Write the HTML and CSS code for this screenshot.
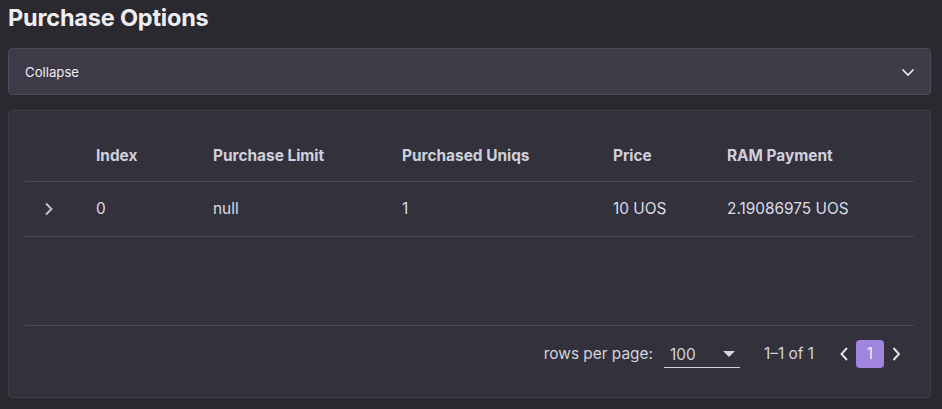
FILE: index.html
```html
<!DOCTYPE html>
<html>
<head>
<meta charset="utf-8">
<link rel="stylesheet" href="styles.css">
</head>
<body>
<h1 class="title">Purchase Options</h1>
<div class="collapse">
  <span>Collapse</span>
  <svg class="chev-down" width="14" height="14" viewBox="0 0 14 14"><path d="M1.5 4.5 L7 10 L12.5 4.5" fill="none" stroke="#e8e8ee" stroke-width="1.7"/></svg>
</div>
<div class="card">
  <table class="tbl">
    <colgroup>
      <col class="c0"><col class="c1"><col class="c2"><col class="c3"><col class="c4"><col class="c5">
    </colgroup>
    <thead>
      <tr><th></th><th>Index</th><th>Purchase Limit</th><th>Purchased Uniqs</th><th>Price</th><th>RAM Payment</th></tr>
    </thead>
    <tbody>
      <tr>
        <td class="exp"><svg width="14" height="16" viewBox="0 0 14 16"><path d="M4 2.5 L9.5 8 L4 13.5" fill="none" stroke="#c8c8d2" stroke-width="1.8"/></svg></td>
        <td>0</td><td>null</td><td>1</td><td>10 UOS</td><td>2.19086975 UOS</td>
      </tr>
    </tbody>
  </table>
  <div class="spacer"></div>
  <div class="footer">
    <span class="rpp">rows per page:</span>
    <div class="select"><span>100</span><svg width="12" height="7" viewBox="0 0 12 7"><path d="M0 0 H12 L6 6 Z" fill="#d6d6de"/></svg></div>
    <span class="range">1–1 of 1</span>
    <div class="pager">
      <svg width="24" height="24" viewBox="0 0 24 24"><path d="M15 6 L9.5 12 L15 18" fill="none" stroke="#e6e6ec" stroke-width="1.9"/></svg>
      <span class="page">1</span>
      <svg width="24" height="24" viewBox="0 0 24 24"><path d="M9.5 6 L15 12 L9.5 18" fill="none" stroke="#e6e6ec" stroke-width="1.9"/></svg>
    </div>
  </div>
</div>
</body>
</html>
```
FILE: styles.css
```css
html, body {
  margin: 0;
  background: #2a2930;
}
body {
  padding: 0 11px 0 8px;
  font-family: Inter, "Noto Sans", sans-serif;
  color: #d8d8e2;
}
.title {
  margin: 0;
  padding-top: 3px;
  font-size: 23.5px;
  line-height: 29px;
  font-weight: 700;
  color: #eeeef2;
  letter-spacing: -0.2px;
}
.collapse {
  margin-top: 16px;
  height: 47px;
  box-sizing: border-box;
  background: #3e3b48;
  border: 1px solid #4d4a58;
  border-radius: 4px;
  display: flex;
  align-items: center;
  justify-content: space-between;
  padding: 0 15px 0 16px;
  font-size: 13.2px;
  color: #ececf2;
}
.chev-down { display: block; }
.card {
  margin-top: 15px;
  height: 288px;
  box-sizing: border-box;
  background: #33313c;
  border: 1px solid #403e49;
  border-radius: 4px;
  padding: 0 16px;
  display: flex;
  flex-direction: column;
}
.tbl {
  margin-top: 22px;
  width: 100%;
  border-collapse: collapse;
  table-layout: fixed;
  font-size: 15.4px;
}
.c0 { width: 55px; }
.c1 { width: 117px; }
.c2 { width: 189px; }
.c3 { width: 211px; }
.c4 { width: 114px; }
.tbl th {
  text-align: left;
  font-weight: 700;
  color: #ced0dc;
  height: 48px;
  padding: 0 16px 3px;
  box-sizing: border-box;
  border-bottom: 1px solid #4a4855;
}
.tbl td {
  height: 54px;
  padding: 0 16px;
  color: #dcdce6;
  border-bottom: 1px solid #4a4855;
}
.tbl td.exp { padding-left: 17px; }
.tbl td.exp svg { display: block; }
.spacer {
  flex: 1;
  border-bottom: 1px solid #4a4855;
}
.footer {
  height: 71px;
  flex-shrink: 0;
  box-sizing: border-box;
  display: flex;
  align-items: center;
  justify-content: flex-end;
  font-size: 15.4px;
  color: #d4d4de;
  padding-bottom: 16px;
}
.rpp { margin-right: 11px; }
.select {
  width: 76px;
  height: 26px;
  box-sizing: border-box;
  border-bottom: 1px solid #d0d0d8;
  display: flex;
  align-items: center;
  justify-content: space-between;
  padding: 0 5px 0 6px;
  margin-top: 2px;
  margin-right: 24px;
}
.range { margin-right: 18px; }
.pager {
  display: flex;
  align-items: center;
  margin-right: 6px;
}
.pager svg { display: block; }
.page {
  width: 28px;
  height: 28px;
  border-radius: 4px;
  background: #a184de;
  color: #f4f0fc;
  display: flex;
  align-items: center;
  justify-content: center;
  font-size: 15.4px;
}
```
